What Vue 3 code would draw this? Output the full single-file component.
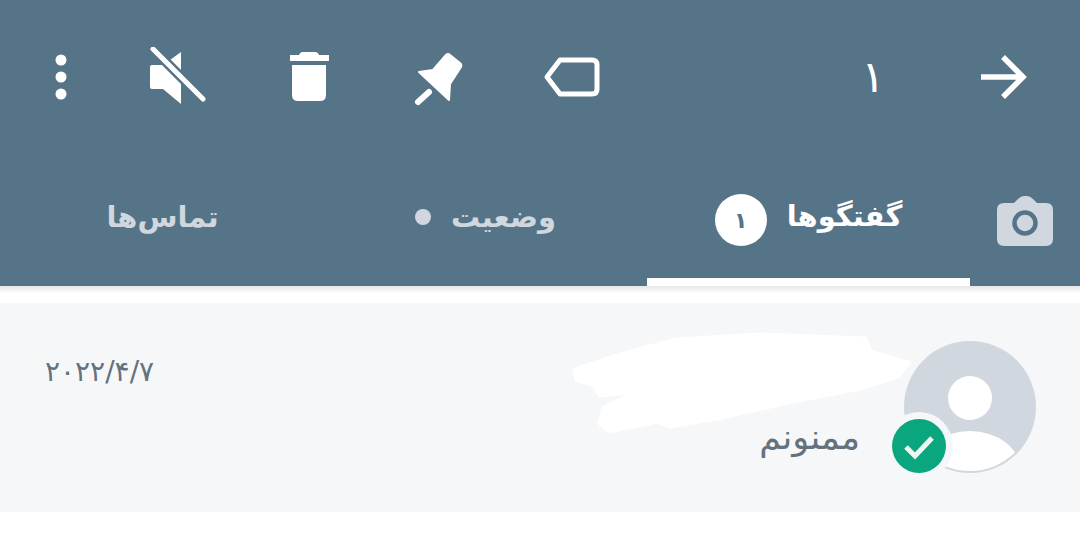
<template>
  <div class="page">
    <header class="appbar">
      <div class="toolbar">
        <svg class="icon" viewBox="0 0 60 60"><circle cx="30" cy="13" r="5.5" fill="#fff"/><circle cx="30" cy="30" r="5.5" fill="#fff"/><circle cx="30" cy="47" r="5.5" fill="#fff"/></svg>
        <svg class="icon" viewBox="0 0 60 60">
          <path d="M2 20q0-2 2-2h11L33 5v52L15 42H4q-2 0-2-2z" fill="#fff"/>
          <path d="M4 1L56 53" stroke="#567488" stroke-width="10"/>
          <path d="M5 2L55 52" stroke="#fff" stroke-width="5" stroke-linecap="round"/>
        </svg>
        <svg class="icon" viewBox="0 0 60 60">
          <path d="M11 8h9q1-3 4-3h12q3 0 4 3h10v6H11z" fill="#fff"/>
          <path d="M13 18h34v30q0 6-6 6H19q-6 0-6-6z" fill="#fff"/>
        </svg>
        <svg class="icon" viewBox="0 0 60 60">
          <path d="M10 25l14-2L37 8q2-2 4 0l10 8q2 2 1 4L41 37l-1 16z" fill="#fff" stroke="#fff" stroke-linejoin="round" stroke-width="2"/>
          <path d="M20 45L9 55" stroke="#fff" stroke-width="6" stroke-linecap="round"/>
        </svg>
        <svg class="icon" viewBox="0 0 60 60"><path d="M18 13h32q5 0 5 5v24q0 5-5 5H18L5 30z" fill="none" stroke="#fff" stroke-width="5" stroke-linejoin="round"/></svg>
        <span class="count">۱</span>
        <svg class="icon" viewBox="0 0 60 60"><path d="M8 30h42M30 10l20 20-20 20" fill="none" stroke="#fff" stroke-width="5.5"/></svg>
      </div>
      <nav class="tabs">
        <div class="camera">
          <svg width="56" height="50" viewBox="0 0 56 50">
            <path d="M7 7h10l4-4q3-3 6-3h3q3 0 6 3l4 4h9q7 0 7 7v29q0 7-7 7H7q-7 0-7-7V14q0-7 7-7z" fill="#d0d7df"/>
            <circle cx="28" cy="27" r="10.5" fill="none" stroke="#567488" stroke-width="4.5"/>
          </svg>
        </div>
        <div class="tab active">
          <span>گفتگوها</span>
          <span class="badge">۱</span>
        </div>
        <div class="tab">
          <span>وضعیت</span>
          <span class="dot"></span>
        </div>
        <div class="tab">
          <span>تماس‌ها</span>
        </div>
      </nav>
    </header>
    <div class="shadow"></div>
    <section class="row">
      <div class="avatar">
        <svg width="132" height="132" viewBox="0 0 132 132">
          <defs><clipPath id="av"><circle cx="66" cy="66" r="64"/></clipPath></defs>
          <circle cx="66" cy="66" r="66" fill="#d0d7df"/>
          <circle cx="66" cy="57" r="22" fill="#fff"/>
          <ellipse cx="66" cy="128" rx="50" ry="38" fill="#fff" clip-path="url(#av)"/>
        </svg>
        <span class="check">
          <svg width="54" height="54" viewBox="0 0 54 54">
            <circle cx="27" cy="27" r="27" fill="#0aa77f"/>
            <path d="M14 28l9 9 17-18" fill="none" stroke="#eef7f4" stroke-width="5"/>
          </svg>
        </span>
      </div>
      <div class="message">ممنونم</div>
      <div class="date">۲۰۲۲/۴/۷</div>
      <svg class="scribble" width="344" height="108" viewBox="0 0 344 108">
        <polygon points="5,39 50,24 107,9 190,4 295,8 300,21 338,32 328,45 290,57 223,70 147,87 100,95 87,90 40,100 30,92 34,77 70,60 30,64 24,53 7,49" fill="#fff" stroke="#fff" stroke-width="5" stroke-linejoin="round"/>
      </svg>
    </section>
  </div>
</template>

<script setup>
</script>

<style>
body {
  background: #fff;
}
</style>

<style scoped>
.page {
  width: 1080px;
  height: 547px;
  overflow: hidden;
  background: #fff;
  font-family: "DejaVu Sans", "Noto Sans", sans-serif;
}

.appbar {
  height: 286px;
  background: #567488;
  display: flex;
  flex-direction: column;
}

.toolbar {
  height: 154px;
  display: grid;
  grid-template-columns: 122px 112px 150px 110px 156px 146px 154px 106px;
  direction: ltr;
  align-items: center;
  justify-items: center;
}

.icon {
  width: 60px;
  height: 60px;
}

.toolbar .icon:nth-child(5) {
  grid-column: 5;
}

.count {
  grid-column: 7;
  color: #fff;
  font-size: 44px;
  line-height: 44px;
}

.tabs {
  flex: 1;
  display: flex;
  direction: rtl;
}

.camera {
  width: 110px;
  display: flex;
  justify-content: center;
  align-items: flex-start;
  padding-top: 42px;
  box-sizing: border-box;
}

.tab {
  width: 323px;
  display: flex;
  justify-content: center;
  align-items: center;
  gap: 20px;
  padding-bottom: 6px;
  box-sizing: border-box;
  color: #d0d7df;
  font-size: 29px;
  font-weight: 700;
}

.tab.active {
  color: #fff;
  border-bottom: 8px solid #fff;
  padding-bottom: 0;
}

.badge {
  width: 52px;
  height: 52px;
  margin-top: 8px;
  border-radius: 50%;
  background: #fff;
  color: #567488;
  font-size: 22px;
  display: flex;
  align-items: center;
  justify-content: center;
}

.dot {
  width: 16px;
  height: 16px;
  border-radius: 50%;
  background: #d0d7df;
}

.shadow {
  height: 17px;
  background: linear-gradient(#e6e7e9, #fff 45%);
}

.row {
  position: relative;
  height: 209px;
  background: #f6f7f9;
  display: flex;
  direction: rtl;
  padding: 38px 44px 0 45px;
  box-sizing: border-box;
}

.avatar {
  position: relative;
  width: 132px;
  height: 132px;
  flex: none;
}

.check {
  position: absolute;
  left: -12px;
  top: 78px;
  border-radius: 50%;
  box-shadow: 0 0 0 7px #f6f7f9;
  line-height: 0;
}

.message {
  margin-right: 44px;
  margin-top: 74px;
  color: #64727e;
  font-size: 35px;
  line-height: 44px;
  height: 44px;
}

.date {
  margin-right: auto;
  margin-top: 14px;
  color: #64727e;
  font-size: 28px;
  line-height: 34px;
  height: 34px;
}

.scribble {
  position: absolute;
  left: 570px;
  top: 28px;
}
</style>
